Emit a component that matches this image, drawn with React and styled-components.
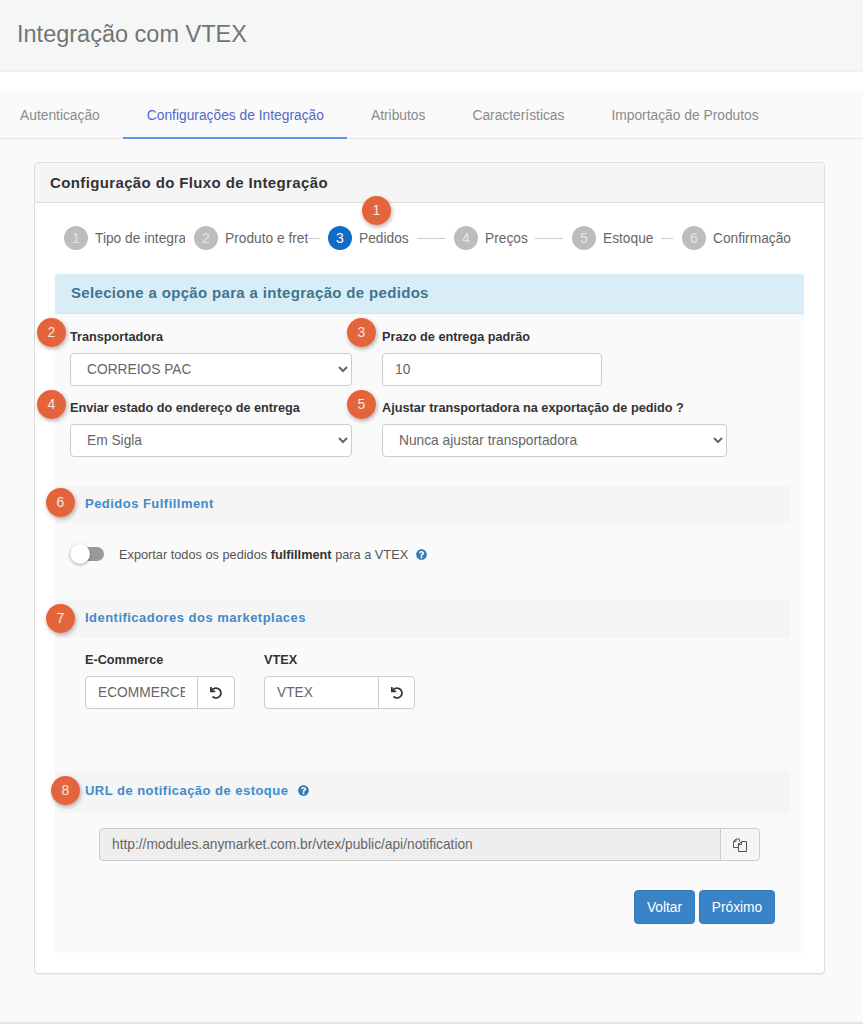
import React from 'react'
import styled, { createGlobalStyle } from 'styled-components'
import { FaUndo, FaQuestionCircle } from 'react-icons/fa'

const GlobalStyle = createGlobalStyle`
  html, body {
    margin: 0;
    padding: 0;
    background: #fff;
    font-family: "Liberation Sans", Arial, sans-serif;
  }
  * { box-sizing: border-box; }
`
const Page = styled.div`
  width: 863px;
  height: 1024px;
  overflow: hidden;
  display: flex;
  flex-direction: column;
`
const Header = styled.header`
  height: 72px;
  flex: none;
  background: #f5f7f7;
  border-bottom: 1px solid #eef0f0;
  padding: 19px 17px 0;
`
const PageTitle = styled.h1`
  margin: 0;
  font-size: 23.5px;
  line-height: 30px;
  font-weight: 400;
  color: #747474;
`
const Tabs = styled.nav`
  margin-top: 19px;
  height: 48px;
  flex: none;
  display: flex;
  background: #fafafa;
  border-bottom: 1px solid #e6e6e6;
  padding-left: 20px;
`
const Tab = styled.div`
  height: 48px;
  padding: 0 23.5px;
  font-size: 13.8px;
  line-height: 49px;
  white-space: nowrap;
  color: ${props => (props.$active ? '#5468c8' : '#8a8a8a')};
  border-bottom: ${props => (props.$active ? '2px solid #5b92ea' : 'none')};
  &:first-child { padding-left: 0; }
`
const Main = styled.main`
  flex: 1;
  background: #fafafa;
  padding: 23px 38px 0 34px;
  border-bottom: 2px solid #e4e4e4;
`
const Panel = styled.section`
  width: 791px;
  height: 812px;
  background: #fff;
  border: 1px solid #ddd;
  border-radius: 4px;
  box-shadow: 0 1px 1px rgba(0, 0, 0, 0.05);
`
const PanelHeading = styled.div`
  height: 40px;
  background: #f5f5f5;
  border-bottom: 1px solid #ddd;
  border-radius: 3px 3px 0 0;
  padding: 0 15px;
  font-size: 15px;
  font-weight: 700;
  letter-spacing: 0.37px;
  line-height: 40px;
  color: #333;
`
const Stepper = styled.div`
  position: relative;
  height: 71px;
  padding: 23px 0 0 29px;
  display: flex;
  align-items: flex-start;
`
const Step = styled.div`
  width: ${props => props.$width}px;
  flex: none;
  height: 24px;
  display: flex;
  align-items: center;
`
const StepCircle = styled.span`
  width: 24px;
  height: 24px;
  flex: none;
  border-radius: 50%;
  background: ${props => (props.$active ? '#0f6bc4' : '#bdbdbd')};
  color: ${props => (props.$active ? '#fff' : '#e4e4e4')};
  font-size: 14px;
  line-height: 24px;
  text-align: center;
`
const StepLabel = styled.span`
  margin-left: 7px;
  flex: none;
  width: ${props => (props.$clip ? `${props.$clip}px` : 'auto')};
  overflow: hidden;
  white-space: nowrap;
  font-size: 13.75px;
  color: #666;
`
const StepLine = styled.span`
  flex: 1;
  height: 1px;
  background: #ccc;
  margin: 0 ${props => props.$inset}px 0 ${props => props.$start}px;
`
const Badge = styled.span`
  position: absolute;
  left: ${props => props.$left}px;
  top: ${props => props.$top}px;
  width: 29px;
  height: 29px;
  border-radius: 50%;
  background: radial-gradient(circle at 55% 50%, #e0683f 0%, #e5623a 70%, #e85a30 100%);
  box-shadow: 1px 2px 4px rgba(0, 0, 0, 0.3);
  color: #f7e4dc;
  font-size: 14px;
  letter-spacing: 0;
  font-weight: 400;
  line-height: 29px;
  text-align: center;
  z-index: 2;
`
const Body = styled.div`
  margin: 0 20px;
  height: 679px;
  background: #fafafa;
`
const Alert = styled.div`
  height: 40px;
  background: #d9edf7;
  border-bottom: 1px solid #d2e8f2;
  border-radius: 3px 3px 0 0;
  padding: 0 16px;
  font-size: 15px;
  font-weight: 700;
  letter-spacing: 0.33px;
  line-height: 38px;
  color: #3f7590;
`
const FormRow = styled.div`
  display: flex;
  gap: 30px;
  padding-left: 15px;
  margin-top: ${props => props.$top}px;
`
const Field = styled.div`
  position: relative;
  width: ${props => props.$width}px;
  flex: none;
`
const Label = styled.label`
  display: block;
  height: 19px;
  margin-bottom: 6px;
  font-size: 12.7px;
  font-weight: 700;
  line-height: 19px;
  white-space: nowrap;
  color: #333;
`
const Select = styled.select`
  display: block;
  width: 100%;
  height: 33px;
  padding: 0 8px 0 12px;
  background: #fff;
  border: 1px solid #ccc;
  border-radius: 4px;
  font-family: inherit;
  font-size: 13.75px;
  line-height: 30px;
  color: #666;
`
const TextInput = styled.input`
  display: block;
  width: ${props => (props.$grow ? 'auto' : '100%')};
  flex: ${props => (props.$grow ? '1' : 'none')};
  min-width: 0;
  height: 33px;
  padding: 0 12px 1px;
  background: ${props => (props.disabled ? '#eee' : '#fff')};
  border: 1px solid #ccc;
  border-radius: ${props => (props.$grow ? '4px 0 0 4px' : '4px')};
  font-family: inherit;
  font-size: 13.75px;
  color: #666;
`
const SectionBar = styled.div`
  position: relative;
  width: 735px;
  height: ${props => props.$height}px;
  margin-top: ${props => props.$top}px;
  padding: 0 0 3px 30px;
  display: flex;
  align-items: center;
  gap: 10px;
  background: #f5f5f5;
  font-size: 13px;
  font-weight: 700;
  letter-spacing: 0.47px;
  color: #428bca;
`
const HelpIcon = styled(FaQuestionCircle)`
  color: #337ab7;
  width: 11px;
  height: 11px;
  flex: none;
`
const ToggleRow = styled.div`
  height: 20px;
  margin: 20px 0 36px 15px;
  display: flex;
  align-items: center;
  font-size: 12.75px;
  color: #555;
  b { color: #333; }
`
const Toggle = styled.span`
  position: relative;
  width: 34px;
  height: 14px;
  margin-right: 15px;
  flex: none;
  border-radius: 7px;
  background: #9a9a9a;
  &::after {
    content: '';
    position: absolute;
    left: 0;
    top: -3px;
    width: 20px;
    height: 20px;
    border-radius: 50%;
    background: #fff;
    box-shadow: 0 1px 3px rgba(0, 0, 0, 0.35);
  }
`
const ToggleHelp = styled(HelpIcon)`
  margin-left: 8px;
`
const MarketRow = styled.div`
  display: flex;
  gap: 29px;
  padding-left: 30px;
  margin-top: 13px;
`
const InputGroup = styled.div`
  display: flex;
  width: ${props => (props.$width ? `${props.$width}px` : '100%')};
  margin-left: ${props => props.$left || 0}px;
  margin-top: ${props => props.$top || 0}px;
`
const Addon = styled.span`
  width: ${props => props.$width}px;
  height: 33px;
  flex: none;
  margin-left: -1px;
  display: flex;
  align-items: center;
  justify-content: center;
  background: ${props => props.$muted ? '#f5f5f5' : '#fff'};
  border: 1px solid #ccc;
  border-radius: 0 4px 4px 0;
  color: #333;
`
const ButtonRow = styled.div`
  display: flex;
  justify-content: flex-end;
  gap: 4px;
  padding-right: 29px;
  margin-top: 29px;
`
const Button = styled.button`
  height: 34px;
  width: ${props => props.$width}px;
  padding: 0;
  background: #3a83c6;
  border: 1px solid #2e78bb;
  border-radius: 4px;
  font-family: inherit;
  font-size: 13.75px;
  color: #fff;
`
const UndoIcon = styled(FaUndo)`
  width: 12px;
  height: 12px;
`

const CopyIcon = () => (
  <svg width="14" height="14" viewBox="0 0 14 14" fill="none" stroke="#555" strokeWidth="1">
    <path d="M6.5 3.5V1H3L.5 3.5V9.5H5" />
    <path d="M3 1V3.5H.5" />
    <path d="M5.5 5V13.5H13.5V3.5H8.5L5.5 6.5H8.5V3.5" />
  </svg>
)

const steps = [
  { n: 1, label: 'Tipo de integração', width: 130, clip: 90 },
  { n: 2, label: 'Produto e frete', width: 134, clip: 83, start: 0, inset: 8 },
  { n: 3, label: 'Pedidos', width: 126, active: true, start: 8, inset: 9 },
  { n: 4, label: 'Preços', width: 118, start: 7, inset: 9 },
  { n: 5, label: 'Estoque', width: 110, start: 8, inset: 9 },
  { n: 6, label: 'Confirmação', width: 120 },
]

const tabs = ['Autenticação', 'Configurações de Integração', 'Atributos', 'Características', 'Importação de Produtos']

export default function App() {
  return (
    <Page>
      <GlobalStyle />
      <Header>
        <PageTitle>Integração com VTEX</PageTitle>
      </Header>
      <Tabs>
        {tabs.map((t, i) => (
          <Tab key={t} $active={i === 1}>{t}</Tab>
        ))}
      </Tabs>
      <Main>
        <Panel>
          <PanelHeading>Configuração do Fluxo de Integração</PanelHeading>
          <Stepper>
            <Badge $left={327} $top={-7}>1</Badge>
            {steps.map(s => (
              <Step key={s.n} $width={s.width}>
                <StepCircle $active={s.active}>{s.n}</StepCircle>
                <StepLabel $clip={s.clip}>{s.label}</StepLabel>
                {s.inset && <StepLine $start={s.start} $inset={s.inset} />}
              </Step>
            ))}
          </Stepper>
          <Body>
            <Alert>Selecione a opção para a integração de pedidos</Alert>
            <FormRow $top={14}>
              <Field $width={282}>
                <Badge $left={-33} $top={-10}>2</Badge>
                <Label>Transportadora</Label>
                <Select defaultValue="pac">
                  <option value="pac">CORREIOS PAC</option>
                </Select>
              </Field>
              <Field $width={220}>
                <Badge $left={-35} $top={-10}>3</Badge>
                <Label>Prazo de entrega padrão</Label>
                <TextInput defaultValue="10" />
              </Field>
            </FormRow>
            <FormRow $top={13}>
              <Field $width={282}>
                <Badge $left={-33} $top={-9}>4</Badge>
                <Label>Enviar estado do endereço de entrega</Label>
                <Select defaultValue="sigla">
                  <option value="sigla">Em Sigla</option>
                </Select>
              </Field>
              <Field $width={345}>
                <Badge $left={-35} $top={-9}>5</Badge>
                <Label>Ajustar transportadora na exportação de pedido ?</Label>
                <Select defaultValue="nunca">
                  <option value="nunca">Nunca ajustar transportadora</option>
                </Select>
              </Field>
            </FormRow>
            <SectionBar $height={38} $top={29}>
              <Badge $left={-9} $top={2}>6</Badge>
              Pedidos Fulfillment
            </SectionBar>
            <ToggleRow>
              <Toggle />
              <span>Exportar todos os pedidos <b>fulfillment</b> para a VTEX</span>
              <ToggleHelp />
            </ToggleRow>
            <SectionBar $height={38} $top={0}>
              <Badge $left={-9} $top={4}>7</Badge>
              Identificadores dos marketplaces
            </SectionBar>
            <MarketRow>
              <Field $width={150}>
                <Label>E-Commerce</Label>
                <InputGroup>
                  <TextInput $grow defaultValue="ECOMMERCE" />
                  <Addon $width={38}><UndoIcon /></Addon>
                </InputGroup>
              </Field>
              <Field $width={151}>
                <Label>VTEX</Label>
                <InputGroup>
                  <TextInput $grow defaultValue="VTEX" />
                  <Addon $width={37}><UndoIcon /></Addon>
                </InputGroup>
              </Field>
            </MarketRow>
            <SectionBar $height={42} $top={62}>
              <Badge $left={-4} $top={5}>8</Badge>
              URL de notificação de estoque
              <HelpIcon />
            </SectionBar>
            <InputGroup $width={661} $left={44} $top={15}>
              <TextInput $grow disabled defaultValue="http://modules.anymarket.com.br/vtex/public/api/notification" />
              <Addon $width={40} $muted><CopyIcon /></Addon>
            </InputGroup>
            <ButtonRow>
              <Button $width={61}>Voltar</Button>
              <Button $width={76}>Próximo</Button>
            </ButtonRow>
          </Body>
        </Panel>
      </Main>
    </Page>
  )
}
